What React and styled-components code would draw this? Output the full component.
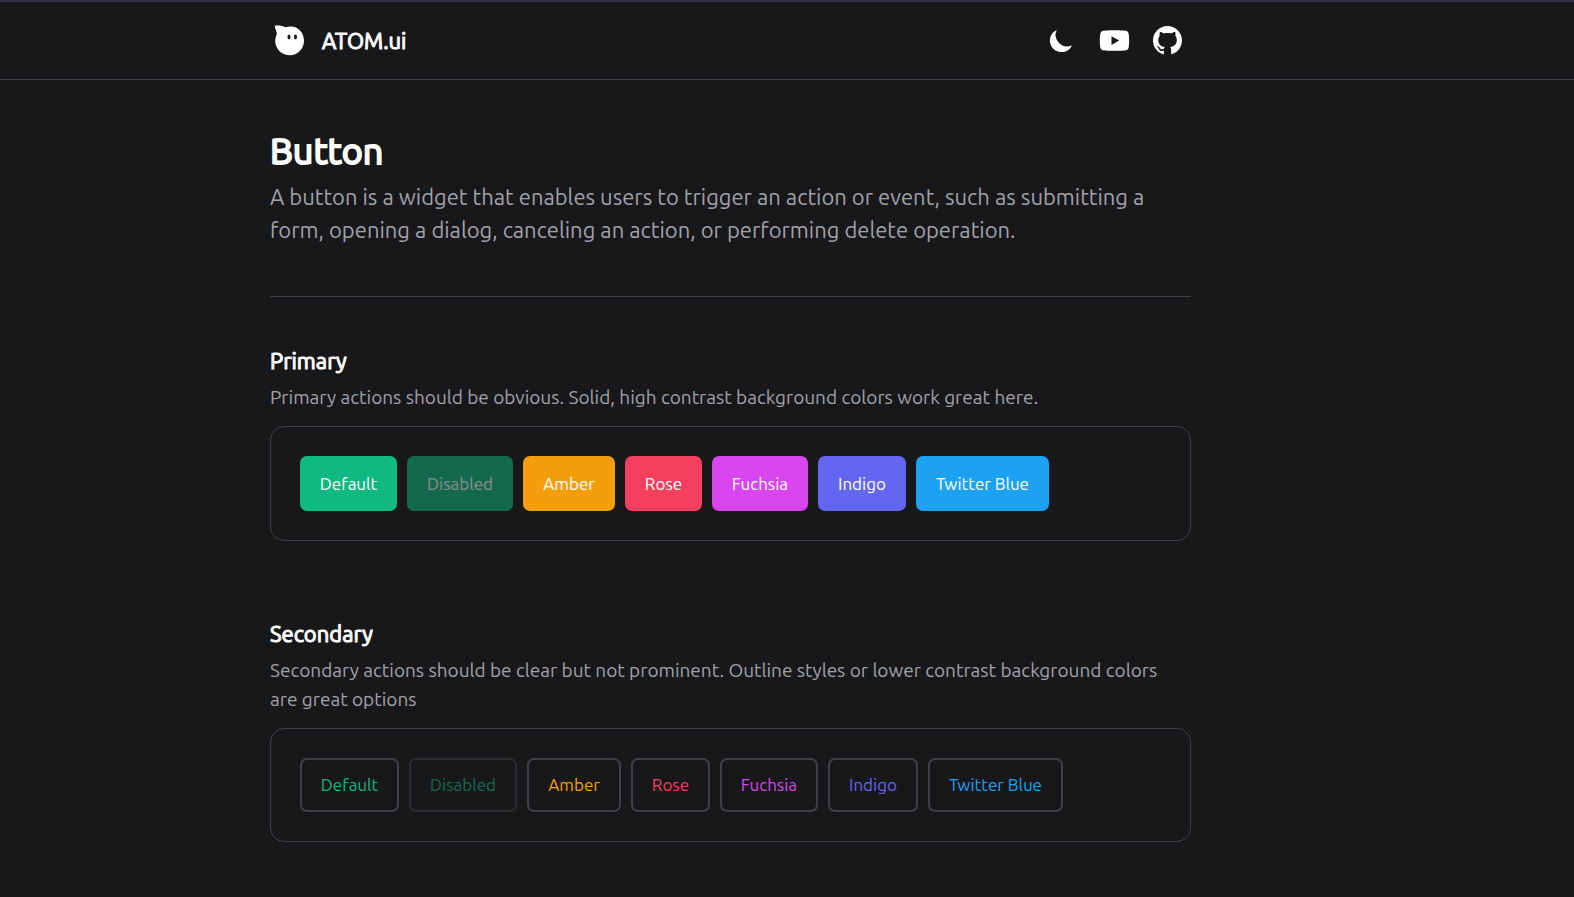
import React from "react";
import styled, { createGlobalStyle, css } from "styled-components";
import { FaYoutube } from "react-icons/fa";
import { BsGithub } from "react-icons/bs";
import { HiMoon } from "react-icons/hi";

const GlobalStyle = createGlobalStyle`
  *, *::before, *::after { box-sizing: border-box; }
  body {
    margin: 0;
    background: #18181b;
    color: #ffffff;
    font-family: Ubuntu, "Noto Sans", sans-serif;
  }
  h1, h2, p { margin: 0; }
`;

/* Headings thicken the regular cut instead of switching to the wider bold one. */
const strongText = css`
  font-weight: 400;
  -webkit-text-stroke: 1px currentColor;
`;

const Page = styled.div`
  min-height: 100vh;
  border-top: 2px solid #2f3041;
`;

const Columns = styled.div`
  display: grid;
  grid-template-columns: minmax(16px, 270px) minmax(0, 921px) minmax(16px, 1fr);

  & > * { grid-column: 2; }
`;

const Header = styled.header`
  border-bottom: 1px solid #3f3f46;
`;

const HeaderBar = styled.div`
  display: flex;
  align-items: center;
  justify-content: space-between;
  height: 77px;
  padding: 0 9px 0 4px;
`;

const Brand = styled.a`
  ${strongText}
  display: flex;
  align-items: center;
  gap: 16px;
  color: inherit;
  font-size: 22px;
  line-height: 32px;
  text-decoration: none;
`;

const Actions = styled.nav`
  display: flex;
  align-items: center;
  gap: 23px;
`;

const IconButton = styled.button`
  display: flex;
  padding: 0;
  border: 0;
  background: none;
  color: inherit;
  cursor: pointer;
`;

const IconLink = styled.a`
  display: flex;
  color: inherit;
`;

const Intro = styled.section`
  padding: 46px 0 50px;
  border-bottom: 1px solid #3f3f46;
`;

const Title = styled.h1`
  ${strongText}
  -webkit-text-stroke-width: 2px;
  font-size: 36px;
  line-height: 50px;
`;

const Lead = styled.p`
  margin-top: 4px;
  color: #a1a1aa;
  font-size: 22px;
  line-height: 33px;
`;

const Example = styled.section`
  padding-top: 49px;

  & + & { padding-top: 78px; }
`;

const Heading = styled.h2`
  ${strongText}
  font-size: 22px;
  line-height: 30px;
`;

const Description = styled.p`
  margin: 7px 0 14px;
  padding-right: 14px;
  color: #a1a1aa;
  font-size: 19px;
  line-height: 29px;
`;

const Panel = styled.div`
  display: flex;
  flex-wrap: wrap;
  gap: 10px;
  padding: 29px;
  border: 1px solid #3f3f46;
  border-radius: 14px;
`;

const Button = styled.button`
  width: ${(p) => p.$width}px;
  padding: 0;
  border-radius: 7px;
  font-family: inherit;
  font-size: 17px;
  line-height: 24px;
  white-space: nowrap;
  cursor: pointer;

  &:disabled {
    opacity: 0.5;
    cursor: not-allowed;
  }
`;

const SolidButton = styled(Button)`
  height: 55px;
  border: 0;
  background: ${(p) => p.$color};
  color: #ffffff;
`;

const OutlineButton = styled(Button)`
  height: 54px;
  border: 2px solid #3f3f46;
  background: transparent;
  color: ${(p) => p.$color};
`;

const variants = [
  { label: "Default", color: "#10b981", solid: 97, outline: 99 },
  { label: "Disabled", color: "#10b981", solid: 106, outline: 108, disabled: true },
  { label: "Amber", color: "#f59e0b", solid: 92, outline: 94 },
  { label: "Rose", color: "#f43f5e", solid: 77, outline: 79 },
  { label: "Fuchsia", color: "#d946ef", solid: 96, outline: 98 },
  { label: "Indigo", color: "#6366f1", solid: 88, outline: 90 },
  { label: "Twitter Blue", color: "#1da1f2", solid: 133, outline: 135 },
];

function Logo() {
  return (
    <svg width="32" height="32" viewBox="0 0 32 32" aria-hidden="true">
      <path
        fill="#ffffff"
        d="M.8 .8C4.500 .3 8.500 .8 11.500 2.200C22 -1 30 6 30 15.900A14.400 14.400 0 1 1 2.800 9.200C2.900 5.800 .5 3.500 .8 .8Z"
      />
      <ellipse cx="15" cy="12" rx="1.500" ry="2.400" fill="#18181b" />
      <ellipse cx="21.500" cy="12" rx="1.500" ry="2.400" fill="#18181b" />
    </svg>
  );
}

export default function App() {
  return (
    <Page>
      <GlobalStyle />
      <Header>
        <Columns>
          <HeaderBar>
            <Brand href="#">
              <Logo />
              ATOM.ui
            </Brand>
            <Actions>
              <IconButton type="button" aria-label="Toggle theme">
                <HiMoon size={29} />
              </IconButton>
              <IconLink href="#" aria-label="YouTube">
                <FaYoutube size={31} />
              </IconLink>
              <IconLink href="#" aria-label="GitHub">
                <BsGithub size={29} />
              </IconLink>
            </Actions>
          </HeaderBar>
        </Columns>
      </Header>
      <Columns as="main">
        <Intro>
          <Title>Button</Title>
          <Lead>
            A button is a widget that enables users to trigger an action or event, such as
            submitting a form, opening a dialog, canceling an action, or performing delete
            operation.
          </Lead>
        </Intro>
        <Example>
          <Heading>Primary</Heading>
          <Description>
            Primary actions should be obvious. Solid, high contrast background colors work great
            here.
          </Description>
          <Panel>
            {variants.map((v) => (
              <SolidButton
                key={v.label}
                type="button"
                $color={v.color}
                $width={v.solid}
                disabled={v.disabled}
              >
                {v.label}
              </SolidButton>
            ))}
          </Panel>
        </Example>
        <Example>
          <Heading>Secondary</Heading>
          <Description>
            Secondary actions should be clear but not prominent. Outline styles or lower contrast
            background colors are great options
          </Description>
          <Panel>
            {variants.map((v) => (
              <OutlineButton
                key={v.label}
                type="button"
                $color={v.color}
                $width={v.outline}
                disabled={v.disabled}
              >
                {v.label}
              </OutlineButton>
            ))}
          </Panel>
        </Example>
      </Columns>
    </Page>
  );
}
